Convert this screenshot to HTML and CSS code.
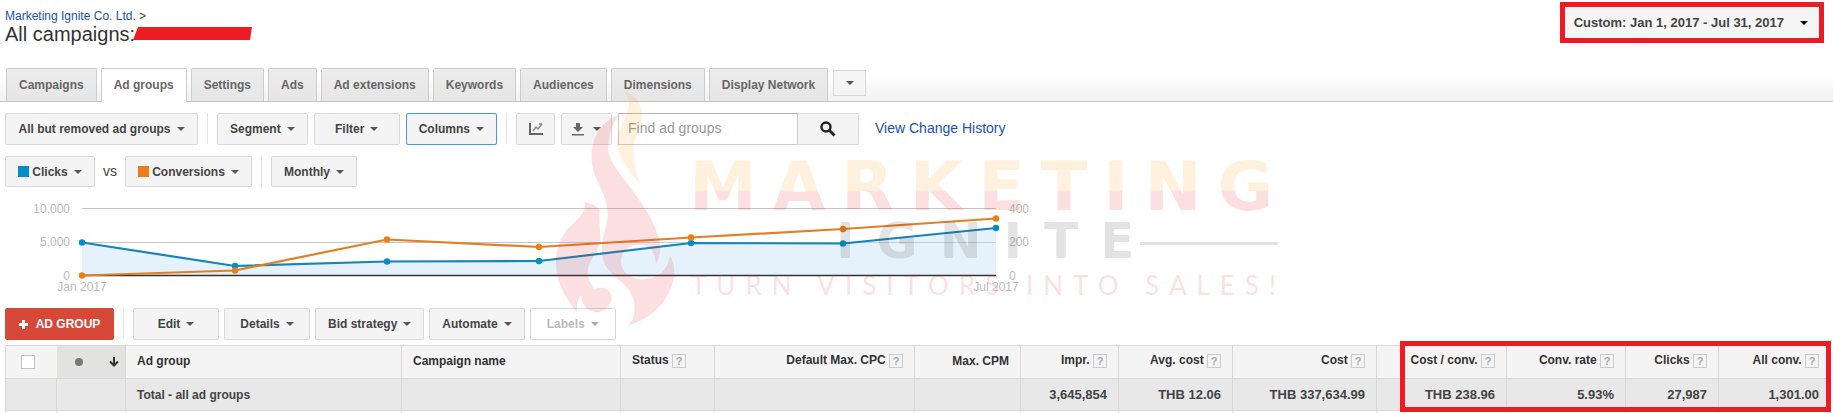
FILE: index.html
```html
<!DOCTYPE html>
<html lang="en">

<head>
    <meta charset="UTF-8">
    <meta name="viewport" content="width=device-width, initial-scale=1.0">
    <title>Ad groups</title>
    <link rel="stylesheet" href="styles.css">
</head>

<body>

    <header class="top">
        <div class="account">
            <p class="breadcrumb"><a href="#">Marketing Ignite Co. Ltd.</a> &gt;</p>
            <div class="title-row">
                <h1>All campaigns:</h1>
                <svg class="redacted" width="119" height="14" viewBox="0 0 119 14">
                    <path d="M5 0H119L117 13H0Z" fill="#ed1c24" />
                </svg>
            </div>
        </div>
        <button type="button" class="date-range">Custom: Jan 1, 2017 - Jul 31, 2017 <span class="arrow"></span></button>
    </header>

    <nav class="tabs">
        <a href="#">Campaigns</a>
        <a href="#" class="active">Ad groups</a>
        <a href="#">Settings</a>
        <a href="#">Ads</a>
        <a href="#">Ad extensions</a>
        <a href="#">Keywords</a>
        <a href="#">Audiences</a>
        <a href="#">Dimensions</a>
        <a href="#">Display Network</a>
        <button type="button" class="more-tabs" aria-label="More tabs"><span class="arrow"></span></button>
    </nav>

    <div class="toolbar filters">
        <button type="button" class="btn wide">All but removed ad groups <span class="arrow"></span></button>
        <span class="separator"></span>
        <button type="button" class="btn medium">Segment <span class="arrow"></span></button>
        <button type="button" class="btn">Filter <span class="arrow"></span></button>
        <button type="button" class="btn medium selected">Columns <span class="arrow"></span></button>
        <span class="separator"></span>
        <div class="icon-buttons">
            <button type="button" class="btn icon" aria-label="Toggle graph">
                <svg width="14" height="14" viewBox="0 0 14 14" fill="none">
                    <path d="M1 1V12H14" stroke="#666" stroke-width="2" />
                    <path d="M4 9L7 5L9 7L13 2M10 2H13" stroke="#888" stroke-width="1.4" />
                </svg>
            </button>
            <button type="button" class="btn icon download" aria-label="Download report">
                <svg width="12" height="14" viewBox="0 0 12 14" fill="#666">
                    <path d="M4 1H8V5H11L6 10L1 5H4Z" />
                    <path d="M0 12H12V13.5H0Z" />
                </svg>
                <span class="arrow"></span>
            </button>
        </div>
        <form class="search">
            <input type="text" placeholder="Find ad groups" aria-label="Find ad groups">
            <button type="button" aria-label="Search">
                <svg width="16" height="16" viewBox="0 0 16 16" fill="none" stroke="#222">
                    <circle cx="6" cy="6" r="4.5" stroke-width="2.4" />
                    <path d="M9.5 9.5L14.5 14.5" stroke-width="2.8" />
                </svg>
            </button>
        </form>
        <a href="#" class="history">View Change History</a>
    </div>

    <div class="toolbar metrics">
        <button type="button" class="btn medium"><span class="swatch blue"></span>Clicks <span class="arrow"></span></button>
        <span class="vs">vs</span>
        <button type="button" class="btn metric"><span class="swatch orange"></span>Conversions <span class="arrow"></span></button>
        <span class="separator"></span>
        <button type="button" class="btn">Monthly <span class="arrow"></span></button>
    </div>

    <svg class="chart" width="1040" height="100" viewBox="0 0 1040 100">
        <path d="M82 8.5H996M82 42.5H996" stroke="#c4c4c4" />
        <path d="M82 42.5L235 66L387 61.5L539 61L691 43L843 43.5L996 28V75.5H82Z" fill="#e6f2fb" />
        <path d="M539 42.5H996" stroke="#c4d0d6" />
        <path d="M82 75.5H996" stroke="#333" stroke-width="1.5" />
        <g fill="none" stroke-width="2.2">
            <path d="M82 42.5L235 66L387 61.5L539 61L691 43L843 43.5L996 28" stroke="#1585b8" />
            <path d="M82 75.5L235 70.5L387 39.5L539 47L691 37.5L843 29L996 18.5" stroke="#e27f22" />
        </g>
        <g fill="#058dc7">
            <circle cx="82" cy="42.5" r="3.2" />
            <circle cx="235" cy="66" r="3.2" />
            <circle cx="387" cy="61.5" r="3.2" />
            <circle cx="539" cy="61" r="3.2" />
            <circle cx="691" cy="43" r="3.2" />
            <circle cx="843" cy="43.5" r="3.2" />
            <circle cx="996" cy="28" r="3.2" />
        </g>
        <g fill="#ed7e17">
            <circle cx="82" cy="75.5" r="3.2" />
            <circle cx="235" cy="70.5" r="3.2" />
            <circle cx="387" cy="39.5" r="3.2" />
            <circle cx="539" cy="47" r="3.2" />
            <circle cx="691" cy="37.5" r="3.2" />
            <circle cx="843" cy="29" r="3.2" />
            <circle cx="996" cy="18.5" r="3.2" />
        </g>
        <g class="left-axis">
            <text x="70" y="13">10,000</text>
            <text x="70" y="46">5,000</text>
            <text x="70" y="80">0</text>
        </g>
        <g>
            <text x="1009" y="13">400</text>
            <text x="1009" y="46">200</text>
            <text x="1009" y="80">0</text>
        </g>
        <g class="months">
            <text x="82" y="91">Jan 2017</text>
            <text x="996" y="91">Jul 2017</text>
        </g>
    </svg>

    <div class="toolbar actions">
        <button type="button" class="btn add">
            <svg width="9" height="9" viewBox="0 0 9 9">
                <path d="M4.5 0V9M0 4.5H9" stroke="#fff" stroke-width="3" />
            </svg>
            AD GROUP
        </button>
        <span class="separator"></span>
        <button type="button" class="btn">Edit <span class="arrow"></span></button>
        <button type="button" class="btn">Details <span class="arrow"></span></button>
        <button type="button" class="btn">Bid strategy <span class="arrow"></span></button>
        <button type="button" class="btn">Automate <span class="arrow"></span></button>
        <button type="button" class="btn" disabled>Labels <span class="arrow"></span></button>
    </div>

    <div class="table-wrap">
        <table>
            <colgroup>
                <col class="col-check">
                <col class="col-dot">
                <col>
                <col class="col-campaign">
                <col class="col-status">
                <col class="col-cpc">
                <col class="col-cpm">
                <col class="col-impr">
                <col class="col-avg">
                <col class="col-cost">
                <col class="col-cost-conv">
                <col class="col-rate">
                <col class="col-clicks">
                <col class="col-all">
            </colgroup>
            <thead>
                <tr>
                    <th class="check"><input type="checkbox" aria-label="Select all ad groups"></th>
                    <th class="sorted">
                        <div class="sort-icons">
                            <span class="dot"></span>
                            <svg width="10" height="10" viewBox="0 0 10 10" fill="none" stroke="#333" stroke-width="2">
                                <path d="M5 0V9M1 4.5L5 8.5L9 4.5" />
                            </svg>
                        </div>
                    </th>
                    <th>Ad group</th>
                    <th>Campaign name</th>
                    <th>Status <span class="help">?</span></th>
                    <th class="num">Default Max. CPC <span class="help">?</span></th>
                    <th class="num">Max. CPM</th>
                    <th class="num">Impr. <span class="help">?</span></th>
                    <th class="num">Avg. cost <span class="help">?</span></th>
                    <th class="num">Cost <span class="help">?</span></th>
                    <th class="num">Cost / conv. <span class="help">?</span></th>
                    <th class="num">Conv. rate <span class="help">?</span></th>
                    <th class="num">Clicks <span class="help">?</span></th>
                    <th class="num">All conv. <span class="help">?</span></th>
                </tr>
            </thead>
            <tbody>
                <tr class="total">
                    <td></td>
                    <td></td>
                    <td class="name">Total - all ad groups</td>
                    <td></td>
                    <td></td>
                    <td></td>
                    <td></td>
                    <td class="num">3,645,854</td>
                    <td class="num">THB 12.06</td>
                    <td class="num">THB 337,634.99</td>
                    <td class="num">THB 238.96</td>
                    <td class="num">5.93%</td>
                    <td class="num">27,987</td>
                    <td class="num">1,301.00</td>
                </tr>
                <tr class="next">
                    <td></td><td></td><td></td><td></td><td></td><td></td><td></td>
                    <td></td><td></td><td></td><td></td><td></td><td></td><td></td>
                </tr>
            </tbody>
        </table>
        <div class="highlight"></div>
    </div>

    <!-- agency logo laid over the report -->
    <svg class="watermark" width="750" height="250" viewBox="0 0 750 250">
        <defs>
            <linearGradient id="word" gradientUnits="userSpaceOnUse" x1="0" y1="76" x2="0" y2="126">
                <stop offset="0.58" stop-color="#ff9900" />
                <stop offset="0.62" stop-color="#ed1c24" />
            </linearGradient>
        </defs>
        <g transform="scale(0.3333)">
            <path fill="#ff9900" d="M233 15C262 28 292 50 291 88C289 130 262 155 265 210C268 245 276 270 286 298C255 262 220 220 216 175C213 125 262 85 250 45C247 33 241 24 233 15Z" />
            <path fill="#ed1c24" d="M222 90C160 112 138 165 140 225C143 290 188 320 188 385C188 435 160 470 175 525C186 575 262 590 268 660C271 690 262 710 247 722C320 700 366 655 384 590C392 555 386 530 375 512C370 550 342 580 300 583C255 586 226 560 228 525C231 490 265 475 300 482C320 487 330 505 333 538C344 515 349 492 344 470C330 405 290 355 250 300C210 245 180 215 192 165C196 135 206 110 222 90Z" />
            <path fill="#ed1c24" d="M118 350C128 385 90 405 62 440C25 490 25 560 52 615C64 640 79 660 96 680C95 660 98 640 108 632C112 670 140 685 165 680C195 673 205 645 196 625C188 608 168 604 148 612C138 595 126 580 128 558C132 520 165 500 166 460C167 430 160 400 165 375C155 362 137 355 118 350Z" />
        </g>
        <text class="wm-marketing" x="144" y="125" fill="url(#word)">MARKETING</text>
        <text class="wm-ignite" x="291" y="173">IGNITE</text>
        <path d="M595 158.5H733" stroke="#333" stroke-width="3" />
        <text class="wm-tagline" x="146" y="210">TURN VISITORS INTO SALES!</text>
    </svg>

</body>

</html>
```
FILE: styles.css
```css
body {
    position: relative;
    margin: 0;
    background-color: #fff;
    font-family: "Liberation Sans", Arial, sans-serif;
    font-size: 12px;
    color: #444;
    overflow-x: hidden;
}

a {
    color: #1a50b8;
    text-decoration: none;
}

button,
input {
    box-sizing: border-box;
    font-family: inherit;
    font-size: 12px;
    margin: 0;
}

/* header */

.top {
    display: flex;
    justify-content: space-between;
    align-items: flex-start;
    height: 68px;
    padding: 0 9px 0 5px;
}

.breadcrumb {
    margin: 9px 0 0;
    line-height: 15px;
}

.title-row {
    display: flex;
    align-items: center;
}

h1 {
    margin: 0;
    font-size: 20px;
    font-weight: normal;
    line-height: 20px;
    color: #333;
}

.redacted {
    margin-left: -2px;
}

.date-range {
    display: flex;
    align-items: center;
    gap: 16px;
    height: 41px;
    margin-top: 2px;
    padding: 0 11px 0 9px;
    border: 5px solid #ed1c24;
    background-color: #f5f5f5;
    color: #444;
    font-size: 13px;
    font-weight: bold;
}

.arrow {
    flex: none;
    border-left: 4px solid transparent;
    border-right: 4px solid transparent;
    border-top: 4px solid #555;
}

.date-range .arrow {
    border-top-color: #000;
}

/* tabs */

.tabs {
    display: flex;
    gap: 4px;
    height: 34px;
    padding-left: 6px;
    box-sizing: border-box;
    border-bottom: 1px solid #c4c4c4;
    background: linear-gradient(#fff 20%, #f1f1f1);
}

.tabs a {
    box-sizing: border-box;
    height: 33px;
    padding: 0 12px;
    border: 1px solid #ccc;
    border-bottom: none;
    border-radius: 2px 2px 0 0;
    background: linear-gradient(#ececec, #e6e6e6);
    color: #666;
    font-weight: bold;
    line-height: 32px;
}

.tabs .active {
    height: 34px;
    background: #fff;
}

.more-tabs {
    display: flex;
    align-items: center;
    justify-content: center;
    width: 33px;
    height: 26px;
    margin: 2px 0 0 1px;
    border: 1px solid #d8d8d8;
    background-color: #f5f5f5;
}

/* toolbars */

.toolbar {
    display: flex;
    align-items: flex-start;
    gap: 6px;
    padding-left: 5px;
}

.btn {
    display: flex;
    align-items: center;
    justify-content: center;
    gap: 6px;
    min-width: 86px;
    height: 32px;
    padding: 0 12px;
    border: 1px solid #d8d8d8;
    border-radius: 2px;
    background-color: #f4f4f4;
    color: #444;
    font-weight: bold;
    white-space: nowrap;
}

.btn.medium {
    min-width: 90px;
}

.btn.selected {
    border-color: #4d90fe;
}

.separator {
    width: 1px;
    height: 31px;
    margin: 0 3px;
    background-color: #e4e4e4;
}

.filters {
    margin-top: 11px;
}

.filters .wide {
    width: 193px;
}

.icon-buttons {
    display: flex;
    gap: 6px;
}

.btn.icon {
    width: 39px;
    min-width: 39px;
    padding: 0;
}

.btn.download {
    width: 51px;
    gap: 9px;
}

.search {
    display: flex;
}

.search input {
    width: 180px;
    height: 32px;
    padding: 0 9px 2px;
    border: 1px solid #ccc;
    border-top-color: #b4b4b4;
    font-size: 14px;
}

.search input::placeholder {
    color: #999;
}

.search button {
    display: flex;
    align-items: center;
    justify-content: center;
    width: 61px;
    height: 32px;
    border: 1px solid #d8d8d8;
    border-left: none;
    background-color: #f4f4f4;
}

.history {
    margin-left: 10px;
    font-size: 14px;
    line-height: 30px;
}

.metrics {
    margin-top: 11px;
    gap: 8px;
}

.metrics .btn {
    height: 31px;
}

.metrics .separator {
    margin: 0 1px;
}

.metrics .metric {
    width: 127px;
}

.swatch {
    width: 11px;
    height: 11px;
    margin-right: -3px;
}

.swatch.blue {
    background-color: #058dc7;
}

.swatch.orange {
    background-color: #ed7e17;
}

.vs {
    font-size: 14px;
    line-height: 30px;
}

/* chart */

.chart {
    display: block;
    margin-top: 13px;
}

.chart text {
    fill: #bbb;
    font-size: 12px;
}

.left-axis {
    text-anchor: end;
}

.months {
    text-anchor: middle;
}

/* actions above the table */

.actions {
    margin-top: 8px;
    gap: 5px;
}

.actions .separator {
    margin: 0 4px;
}

.actions .add {
    width: 109px;
    gap: 8px;
    border-color: #d14836;
    background-color: #d84838;
    color: #fff;
}

.btn:disabled {
    background-color: #fff;
    color: #bbb;
}

.btn:disabled .arrow {
    border-top-color: #aaa;
}

/* table */

.table-wrap {
    position: relative;
    margin: 5px 2px 0 5px;
}

table {
    width: 100%;
    table-layout: fixed;
    border-collapse: collapse;
}

.col-check { width: 51px; }
.col-dot { width: 69px; }
.col-campaign { width: 219px; }
.col-status { width: 94px; }
.col-cpc { width: 200px; }
.col-cpm { width: 106px; }
.col-impr { width: 98px; }
.col-avg { width: 114px; }
.col-cost { width: 144px; }
.col-cost-conv { width: 130px; }
.col-rate { width: 119px; }
.col-clicks { width: 93px; }
.col-all { width: 112px; }

th,
td {
    box-sizing: border-box;
    padding: 0 11px;
    border: 1px solid #d8d8d8;
    text-align: left;
    font-weight: bold;
    white-space: nowrap;
}

th {
    height: 33px;
    padding-bottom: 3px;
    background-color: #f4f4f4;
    color: #333;
}

.total td {
    height: 32px;
    background-color: #e8e8e8;
    font-size: 13px;
}

.total .name {
    font-size: 12px;
}

.next td {
    height: 3px;
    border-bottom: none;
}

th.num,
td.num {
    text-align: right;
}

.check {
    padding: 0 0 0 15px;
    border-right: none;
}

.check input {
    display: block;
    appearance: none;
    width: 14px;
    height: 14px;
    border: 1px solid #c4c4c4;
    background-color: #fff;
}

th.sorted {
    padding: 0 6px 0 18px;
    border-left: none;
    background-color: #e2e2e0;
}

.sort-icons {
    display: flex;
    align-items: center;
    justify-content: space-between;
}

.dot {
    width: 8px;
    height: 8px;
    border-radius: 50%;
    background-color: #777;
}

.help {
    display: inline-block;
    box-sizing: border-box;
    width: 14px;
    height: 14px;
    border: 1px solid #ccc;
    color: #aaa;
    font-size: 11px;
    line-height: 12px;
    text-align: center;
    vertical-align: -1px;
}

.highlight {
    position: absolute;
    top: -4px;
    right: 0;
    width: 431px;
    height: 71px;
    box-sizing: border-box;
    border: 5px solid #ed1c24;
}

/* logo */

.watermark {
    position: absolute;
    left: 545px;
    top: 85px;
    opacity: 0.13;
    pointer-events: none;
}

.wm-marketing {
    font-family: "DejaVu Sans", sans-serif;
    font-size: 68px;
    font-weight: bold;
    letter-spacing: 16px;
}

.wm-ignite {
    font-family: "DejaVu Sans", sans-serif;
    font-size: 50px;
    font-weight: bold;
    letter-spacing: 22px;
    fill: #333;
}

.wm-tagline {
    font-family: Lato, sans-serif;
    font-size: 26px;
    letter-spacing: 10px;
    fill: #ed1c24;
}
```
